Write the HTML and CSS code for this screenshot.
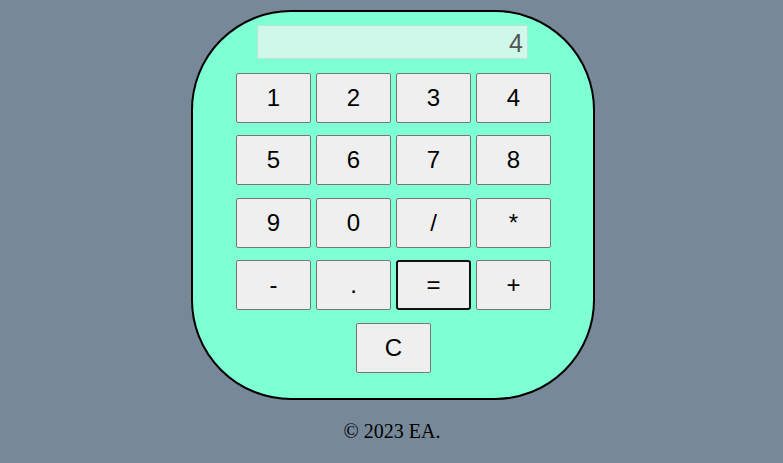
FILE: index.html
```html
<!DOCTYPE html>
<html>
<head>
<meta charset="utf-8">
<link rel="stylesheet" href="styles.css">
</head>
<body>
<div class="calc">
  <div class="display">4</div>
  <div class="keys">
    <button class="key">1</button>
    <button class="key">2</button>
    <button class="key">3</button>
    <button class="key">4</button>
    <button class="key">5</button>
    <button class="key">6</button>
    <button class="key">7</button>
    <button class="key">8</button>
    <button class="key">9</button>
    <button class="key">0</button>
    <button class="key">/</button>
    <button class="key">*</button>
    <button class="key">-</button>
    <button class="key">.</button>
    <button class="key key-focus">=</button>
    <button class="key">+</button>
  </div>
  <button class="key key-clear">C</button>
</div>
<footer class="foot">© 2023 EA.</footer>
</body>
</html>
```
FILE: styles.css
```css
html, body {
  margin: 0;
  padding: 0;
}
body {
  background: #778899;
  font-family: "Liberation Serif", serif;
}
.calc {
  box-sizing: border-box;
  width: 404px;
  height: 390px;
  margin: 10px 0 0 191px;
  background: #7fffd4;
  border: 2px solid #000;
  border-radius: 100px;
  display: flex;
  flex-direction: column;
  align-items: center;
  padding-top: 13px;
}
.display {
  box-sizing: border-box;
  width: 271px;
  height: 34px;
  margin-left: -1px;
  background: #cff8ea;
  border: 1px solid #b8e6d6;
  color: #555;
  font-family: "Liberation Sans", Arial, sans-serif;
  font-size: 25px;
  text-align: right;
  padding: 2px 4px 0 0;
  line-height: 30px;
}
.keys {
  margin-top: 14px;
  margin-left: 1px;
  display: grid;
  grid-template-columns: repeat(4, 75px);
  column-gap: 5px;
  row-gap: 12.4px;
}
.key {
  box-sizing: border-box;
  width: 75px;
  height: 50px;
  background: #efefef;
  border: 1px solid #767676;
  border-radius: 2px;
  font-family: "Liberation Sans", Arial, sans-serif;
  font-size: 24px;
  color: #000;
  padding: 0;
  margin: 0;
}
.key-focus {
  border: 2px solid #101010;
  border-radius: 3px;
}
.key-clear {
  margin-top: 13px;
  margin-left: 1px;
}
.foot {
  text-align: center;
  font-size: 20px;
  margin-top: 20px;
  margin-left: 1px;
  color: #000;
}
```
